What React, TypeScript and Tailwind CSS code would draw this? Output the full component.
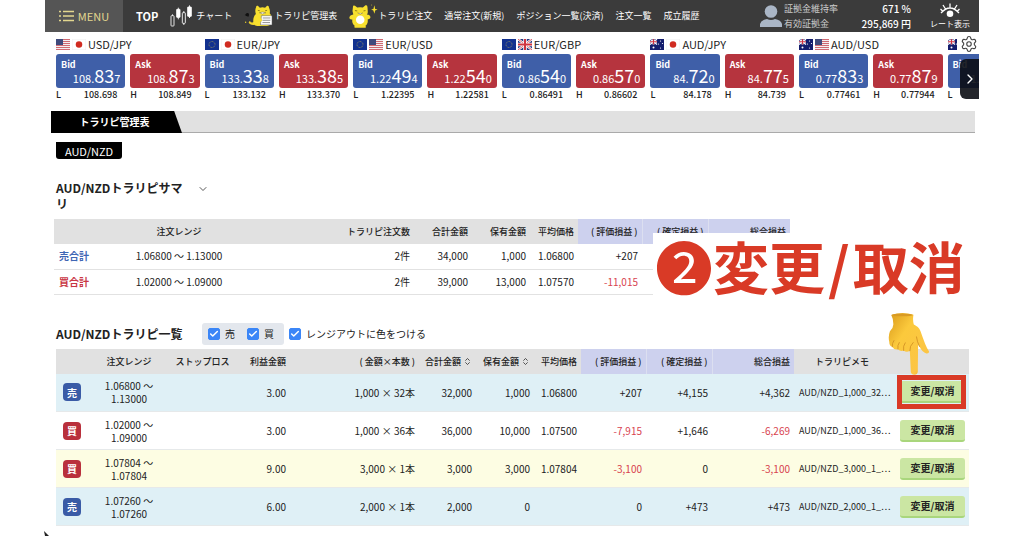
import React, { useState } from 'react';
import { Check, ChevronDown, ChevronRight, ChevronsUpDown, Settings } from 'lucide-react';

type FlagCode = 'us' | 'jp' | 'eu' | 'gb' | 'au';

interface Rate {
  pair: string;
  flags: [FlagCode, FlagCode];
  bid: [string, string, string];
  ask: [string, string, string];
  low: string;
  high: string;
}

interface Order {
  side: '売' | '買';
  from: string;
  to: string;
  profit: string;
  lot: string;
  total: string;
  held: string;
  average: string;
  unrealized: string;
  realized: string;
  sum: string;
  memo: string;
  rowClass: string;
  highlighted?: boolean;
}

const rates: Rate[] = [
  { pair: 'USD/JPY', flags: ['us', 'jp'], bid: ['108.', '83', '7'], ask: ['108.', '87', '3'], low: '108.698', high: '108.849' },
  { pair: 'EUR/JPY', flags: ['eu', 'jp'], bid: ['133.', '33', '8'], ask: ['133.', '38', '5'], low: '133.132', high: '133.370' },
  { pair: 'EUR/USD', flags: ['eu', 'us'], bid: ['1.22', '49', '4'], ask: ['1.22', '54', '0'], low: '1.22395', high: '1.22581' },
  { pair: 'EUR/GBP', flags: ['eu', 'gb'], bid: ['0.86', '54', '0'], ask: ['0.86', '57', '0'], low: '0.86491', high: '0.86602' },
  { pair: 'AUD/JPY', flags: ['au', 'jp'], bid: ['84.', '72', '0'], ask: ['84.', '77', '5'], low: '84.178', high: '84.739' },
  { pair: 'AUD/USD', flags: ['au', 'us'], bid: ['0.77', '83', '3'], ask: ['0.77', '87', '9'], low: '0.77461', high: '0.77944' },
];

const orders: Order[] = [
  { side: '売', from: '1.06800', to: '1.13000', profit: '3.00', lot: '1,000 × 32本', total: '32,000', held: '1,000', average: '1.06800', unrealized: '+207', realized: '+4,155', sum: '+4,362', memo: 'AUD/NZD_1,000_32⋯', rowClass: 'bg-[#dff0f6]', highlighted: true },
  { side: '買', from: '1.02000', to: '1.09000', profit: '3.00', lot: '1,000 × 36本', total: '36,000', held: '10,000', average: '1.07500', unrealized: '-7,915', realized: '+1,646', sum: '-6,269', memo: 'AUD/NZD_1,000_36⋯', rowClass: 'bg-white' },
  { side: '買', from: '1.07804', to: '1.07804', profit: '9.00', lot: '3,000 × 1本', total: '3,000', held: '3,000', average: '1.07804', unrealized: '-3,100', realized: '0', sum: '-3,100', memo: 'AUD/NZD_3,000_1_⋯', rowClass: 'bg-[#fdfde3]' },
  { side: '売', from: '1.07260', to: '1.07260', profit: '6.00', lot: '2,000 × 1本', total: '2,000', held: '0', average: '', unrealized: '0', realized: '+473', sum: '+473', memo: 'AUD/NZD_2,000_1_⋯', rowClass: 'bg-[#dff0f6]' },
];

const summaryCols = ['w-[50px]', 'w-[154px]', 'w-[156px]', 'w-[58px]', 'w-[58px]', 'w-[48px]', 'w-[64px]', 'w-[66px]', 'w-[82px]'];
const orderCols = ['w-[36px]', 'w-[78px]', 'w-[69px]', 'w-[51px]', 'w-[129px]', 'w-[57px]', 'w-[58px]', 'w-[47px]', 'w-[65px]', 'w-[66px]', 'w-[82px]', 'w-[100px]', 'w-[75px]'];

const Flag: React.FC<{ code: FlagCode }> = ({ code }) => (
  <svg viewBox="0 0 28 22" className="h-[11px] w-[14px] shrink-0">
    {code === 'us' && (
      <>
        <rect width="28" height="22" fill="#f3eef0" />
        {[0, 4, 8, 12, 16, 20].map((y) => (
          <rect key={y} y={y} width="28" height="2" fill="#cf6a72" />
        ))}
        <rect width="14" height="12" fill="#3f4a7c" />
      </>
    )}
    {code === 'jp' && (
      <>
        <rect x="0.5" y="0.5" width="27" height="21" fill="#fff" stroke="#efefef" />
        <circle cx="14" cy="11" r="6.5" fill="#d02b20" />
      </>
    )}
    {code === 'eu' && (
      <>
        <rect width="28" height="22" fill="#12318f" />
        <circle cx="14" cy="11" r="6" fill="none" stroke="#a79f58" strokeWidth="1.6" strokeDasharray="1.6 1.5" />
      </>
    )}
    {code === 'gb' && (
      <>
        <rect width="28" height="22" fill="#27397f" />
        <path d="M0 0L28 22M28 0L0 22" stroke="#fff" strokeWidth="4.5" />
        <path d="M0 0L28 22M28 0L0 22" stroke="#cf3340" strokeWidth="1.6" />
        <path d="M14 0V22M0 11H28" stroke="#fff" strokeWidth="7" />
        <path d="M14 0V22M0 11H28" stroke="#cf3340" strokeWidth="4" />
      </>
    )}
    {code === 'au' && (
      <>
        <rect width="28" height="22" fill="#141d6d" />
        <path d="M0 0L14 11M14 0L0 11" stroke="#fff" strokeWidth="2.4" />
        <path d="M7 0V11M0 5.5H14" stroke="#fff" strokeWidth="4" />
        <path d="M7 0V11M0 5.5H14" stroke="#cf3340" strokeWidth="2.2" />
        <circle cx="7" cy="17" r="2" fill="#fff" />
        <circle cx="21" cy="4" r="1.2" fill="#fff" />
        <circle cx="21" cy="18" r="1.2" fill="#fff" />
        <circle cx="17" cy="10" r="1.2" fill="#fff" />
        <circle cx="25" cy="9" r="1.2" fill="#fff" />
      </>
    )}
  </svg>
);

const MenuIcon = () => (
  <svg viewBox="0 0 15 12" className="h-3 w-[15px]" fill="none" stroke="#e3d78f" strokeWidth="1.3">
    <path d="M4 1.5H15M4 6H15M4 10.5H15" />
    <path d="M0 1.5H2M0 6H2M0 10.5H2" />
  </svg>
);

const CandleIcon = () => (
  <svg viewBox="30 15 66 66" className="size-[22px]" fill="none" stroke="#fff" strokeWidth="2.6">
    <rect x="33" y="47" width="9" height="31" rx="2" />
    <path d="M37.5 43V47" />
    <rect x="50" y="28" width="10" height="24" rx="1" fill="#fff" />
    <path d="M55 23V58" />
    <rect x="67" y="38" width="9" height="32" rx="2" />
    <path d="M71.5 33V38M71.5 70V75" />
    <rect x="83" y="21" width="11" height="28" rx="1" fill="#fff" />
    <path d="M88.5 16V54" />
  </svg>
);

const CatPaperIcon = () => (
  <svg viewBox="244 14 88 66" className="h-[22px] w-[29px]">
    <path d="M258 66Q262 76 276 74L276 64Q266 70 262 62Z" fill="#f2d62c" />
    <circle cx="249" cy="66" r="2" fill="#f2d62c" />
    <circle cx="254" cy="43" r="5" fill="#111" />
    <path d="M246 44L257 39L258 49Z" fill="#111" />
    <path d="M281 20Q280 15 286 16L292 22Q300 19 308 22L314 16Q320 15 320 22Q324 30 322 39Q328 44 327 54L326 70Q322 78 312 77H284Q272 77 272 62Q272 48 280 41Q276 30 281 20Z" fill="#f8e02e" />
    <path d="M286 30L292 31M308 31L314 30" stroke="#6b5a12" strokeWidth="2" />
    <path d="M291 37Q300 45 310 37Q300 33 291 37Z" fill="#fff" stroke="#6b5a12" strokeWidth="1.5" />
    <path d="M297 46H329V74H294Z" fill="#fff" stroke="#5a5a5a" strokeWidth="1.5" />
    <path d="M301 53H324M300 60H324M300 67H323" stroke="#777" strokeWidth="2.4" />
    <circle cx="294" cy="59" r="5" fill="#f8e02e" />
  </svg>
);

const CatStarIcon = () => (
  <svg viewBox="556 11 88 76" className="h-[25px] w-[29px]">
    <path d="M568 19Q568 14 574 16L581 22Q590 20 598 22L606 15Q612 13 612 20L613 33Q614 40 610 43Q622 44 621 53Q618 59 613 57Q614 72 606 77Q610 84 602 83H578Q570 84 573 77Q564 70 566 58Q557 60 557 52Q558 45 569 43Q565 30 568 19Z" fill="#f8e02e" />
    <circle cx="590" cy="59" r="13" fill="#fff" />
    <path d="M574 31L581 32M600 32L606 31" stroke="#6b5a12" strokeWidth="2.2" />
    <path d="M582 38Q590 45 598 38" fill="#fff" stroke="#6b5a12" strokeWidth="1.8" />
    <path d="M633 15L635.5 26L643 28L635.5 31L633 41L630 31L623 28L630 26Z" fill="#f8e02e" />
    <circle cx="625" cy="14" r="1.5" fill="#f8e02e" />
  </svg>
);

const UserIcon = () => (
  <svg viewBox="0 0 22 22" className="size-[22px]" fill="#aab6c6">
    <circle cx="11" cy="6.5" r="6.3" />
    <path d="M0 22V19Q1 15 7 14Q11 16 15 14Q21 15 22 19V22Z" />
  </svg>
);

const EyeIcon = () => (
  <svg viewBox="0 0 20 15" className="h-[15px] w-5" fill="none" stroke="#fff" strokeWidth="1.3">
    <path d="M1 10Q10 0 19 10M10 5V0.5M5.5 6L3 2M14.5 6L17 2M2.5 8L0.5 6M17.5 8L19.5 6" />
    <circle cx="10" cy="10.8" r="3.3" fill="#fff" stroke="none" />
  </svg>
);

const PointingHand = () => (
  <svg viewBox="55 25 125 187" className="absolute -top-[68px] -left-3 z-20 h-[62px] w-[42px]">
    <defs>
      <linearGradient id="skin" x1="0" y1="0" x2="1" y2="1">
        <stop offset="0" stopColor="#d99a1c" />
        <stop offset="0.35" stopColor="#fbc93c" />
        <stop offset="0.8" stopColor="#fcc544" />
        <stop offset="1" stopColor="#e09b25" />
      </linearGradient>
    </defs>
    <path d="M64 31Q96 20 131 30Q128 46 132 60Q146 66 152 79Q158 96 166 118Q172 133 178 141Q178 148 170 147Q157 143 149 126L145 120L144 202Q143 211 134 211Q124 211 123 202L120 139Q110 145 101 138Q92 142 84 134Q73 138 67 127Q58 125 58 112Q54 96 60 80Q72 68 70 56Q70 42 64 31Z" fill="url(#skin)" />
    <ellipse cx="97" cy="31" rx="32" ry="4" fill="#d99b24" />
    <path d="M84 134Q82 122 88 114M101 138Q99 124 106 115M67 127Q66 116 72 108M120 139Q119 124 130 114M149 126Q142 112 140 97" fill="none" stroke="#d08f22" strokeWidth="2.5" strokeLinecap="round" />
  </svg>
);

const QuoteButton: React.FC<{ label: 'Bid' | 'Ask'; price: [string, string, string] }> = ({ label, price }) => (
  <button
    className={`h-[34px] rounded-[3px] px-[5px] pt-[5px] text-white ${label === 'Bid' ? 'bg-[#3f5fa8]' : 'bg-[#b6343e]'}`}
  >
    <span className="block text-left text-[9px] leading-[10px] font-bold">{label}</span>
    <span className="-mt-1 block text-right text-[11px] leading-[18px] whitespace-nowrap">
      {price[0]}
      <span className="text-[18px]">{price[1]}</span>
      {price[2]}
    </span>
  </button>
);

const RateCard: React.FC<{ rate: Rate }> = ({ rate }) => (
  <div className="w-[16.1%] shrink-0 pr-[5px]">
    <div className="flex h-[14px] items-center gap-[2px]">
      <Flag code={rate.flags[0]} />
      <Flag code={rate.flags[1]} />
      <span className="text-[11px] leading-[14px] text-[#222]">{rate.pair}</span>
    </div>
    <div className="mt-[3px] grid grid-cols-2 gap-[5px]">
      <QuoteButton label="Bid" price={rate.bid} />
      <QuoteButton label="Ask" price={rate.ask} />
      <p className="-mt-1 flex justify-between pr-2 text-[9px] leading-[12px] font-medium"><span>L</span>{rate.low}</p>
      <p className="-mt-1 flex justify-between pr-2 text-[9px] leading-[12px] font-medium"><span>H</span>{rate.high}</p>
    </div>
  </div>
);

const CheckItem: React.FC<{ id: string; label: string }> = ({ id, label }) => {
  const [checked, setChecked] = useState(true);

  return (
    <div className="flex items-center gap-[5px]">
      <span className="relative flex size-3">
        <input
          id={id}
          type="checkbox"
          checked={checked}
          onChange={(e) => setChecked(e.target.checked)}
          className="size-3 appearance-none rounded-[2px] border border-[#3b86f7] checked:bg-[#3b86f7]"
        />
        {checked && <Check size={10} strokeWidth={3.5} className="pointer-events-none absolute top-px left-px text-white" />}
      </span>
      <label htmlFor={id} className="text-[10px] leading-[14px]">{label}</label>
    </div>
  );
};

const SortLabel: React.FC<{ label: string }> = ({ label }) => (
  <button className="inline-flex items-center gap-[2px] whitespace-nowrap">
    {label}
    <ChevronsUpDown size={9} strokeWidth={2} />
  </button>
);

const amountClass = (value: string) => (value.startsWith('-') ? 'text-[#d8434f]' : '');

export default function App() {
  return (
    <div className="relative min-h-screen bg-white px-[45px] font-['Noto_Sans_CJK_JP','Noto_Sans',sans-serif] text-[#222]">
      <header className="flex h-8 items-center bg-[#3b3b3b] text-[9px] text-white">
        <button className="flex h-8 w-[78px] shrink-0 items-center justify-center gap-1 bg-[#555] text-[11px] text-[#e3d78f]">
          <MenuIcon />
          MENU
        </button>
        <nav className="flex flex-1 items-center gap-3 pl-[13px] whitespace-nowrap">
          <a href="#" className="text-[11px] font-bold">TOP</a>
          <a href="#" className="flex items-center gap-1"><CandleIcon />チャート</a>
          <a href="#" className="flex items-center gap-px"><CatPaperIcon />トラリピ管理表</a>
          <a href="#" className="flex items-center"><CatStarIcon />トラリピ注文</a>
          <a href="#">通常注文(新規)</a>
          <a href="#">ポジション一覧(決済)</a>
          <a href="#">注文一覧</a>
          <a href="#">成立履歴</a>
        </nav>
        <div className="flex items-center gap-[2px]">
          <UserIcon />
          <dl className="grid w-[127px] grid-cols-[auto_1fr] text-[9px] leading-[15px]">
            <dt className="text-[#ccc]">証拠金維持率</dt>
            <dd className="text-right text-[10px] font-medium">671 %</dd>
            <dt className="text-[#ccc]">有効証拠金</dt>
            <dd className="text-right text-[10px] font-medium">295,869 円</dd>
          </dl>
        </div>
        <button className="flex w-[68px] flex-col items-center pl-[10px] text-[8px] leading-[12px]">
          <EyeIcon />
          レート表示
        </button>
      </header>

      <section className="relative flex overflow-hidden pt-[5px] pb-[10px] pl-[11px]">
        {rates.map((rate) => (
          <RateCard key={rate.pair} rate={rate} />
        ))}
        <RateCard rate={{ pair: 'AUD/NZD', flags: ['au', 'us'], bid: ['1.0', '70', '0'], ask: ['1.0', '72', '0'], low: '1.06', high: '1.07' }} />
        <button aria-label="設定" className="absolute top-[3px] right-0 bg-white pr-px pl-[3px] text-[#444]">
          <Settings size={18} strokeWidth={1.5} />
        </button>
        <button aria-label="次へ" className="absolute top-[27px] right-0 flex h-10 w-[19px] items-center justify-center rounded-l-md bg-[#0b0d14]/90 text-white">
          <ChevronRight size={16} strokeWidth={2} />
        </button>
      </section>

      <div className="mr-1 ml-[6px] flex h-[22px] border-b border-[#aaa] bg-[#e1e1e1]">
        <button className="h-[22px] w-[131px] bg-black pr-1 pb-[2px] text-[10px] font-bold text-white [clip-path:polygon(0_0,94%_0,100%_100%,0_100%)]">
          トラリピ管理表
        </button>
      </div>

      <main className="pr-[10px] pl-[11px]">
        <button className="mt-[9px] block h-[17px] w-[66px] rounded-b-[3px] bg-black text-[11px] leading-[14px] text-white">
          AUD/NZD
        </button>

        <div className="mt-[21px] flex items-start gap-[5px]">
          <h2 className="w-[136px] text-[12px] leading-4 font-bold">AUD/NZDトラリピサマリ</h2>
          <button aria-label="開閉" className="mt-[3px]"><ChevronDown size={12} strokeWidth={1.5} /></button>
        </div>

        <div className="relative mt-[7px] -ml-[2px]">
          <table className="w-[736px] table-fixed text-right text-[10px] leading-[14px]">
            <colgroup>{summaryCols.map((c, i) => <col key={i} className={c} />)}</colgroup>
            <thead>
              <tr className="h-[25px] bg-[#e1e1e1] text-[9px] whitespace-nowrap [&>th]:pr-1 [&>th]:font-medium">
                <th />
                <th className="text-center">注文レンジ</th>
                <th>トラリピ注文数</th>
                <th>合計金額</th>
                <th>保有金額</th>
                <th>平均価格</th>
                <th className="border-r border-[#dcdff0] bg-[#cdd1ee]">( 評価損益 )</th>
                <th className="border-r border-[#dcdff0] bg-[#cdd1ee]">( 確定損益 )</th>
                <th className="bg-[#cdd1ee]">総合損益</th>
              </tr>
            </thead>
            <tbody className="[&_td]:pr-1">
              <tr className="h-[25px] border-b border-[#e2e2e2]">
                <td className="pl-[5px] text-left font-bold text-[#3f66b4]">売合計</td>
                <td className="text-center">1.06800 〜 1.13000</td>
                <td>2件</td>
                <td>34,000</td>
                <td>1,000</td>
                <td>1.06800</td>
                <td>+207</td>
                <td />
                <td />
              </tr>
              <tr className="h-[25px] border-b border-[#e2e2e2]">
                <td className="pl-[5px] text-left font-bold text-[#c93644]">買合計</td>
                <td className="text-center">1.02000 〜 1.09000</td>
                <td>2件</td>
                <td>39,000</td>
                <td>13,000</td>
                <td>1.07570</td>
                <td className="text-[#d8434f]">-11,015</td>
                <td />
                <td />
              </tr>
            </tbody>
          </table>
          <p className="absolute top-[14px] left-[599px] flex h-[76px] items-center bg-white pr-1 pb-3 pl-[2px] text-[56px] leading-[64px] font-bold whitespace-nowrap text-[#d93a26]">
            <span className="text-[58px] font-normal">❷</span>変更<span className="px-[3px]">/</span>取消
          </p>
        </div>

        <div className="mt-7 flex items-center">
          <h2 className="w-[146px] text-[12px] leading-4 font-bold">AUD/NZDトラリピ一覧</h2>
          <div className="mr-[5px] flex h-[22px] items-center gap-3 rounded-[3px] bg-[#e3e7ed] px-[6px] pr-[10px]">
            <CheckItem id="filter-sell" label="売" />
            <CheckItem id="filter-buy" label="買" />
          </div>
          <CheckItem id="range-out" label="レンジアウトに色をつける" />
        </div>

        <table className="mt-1 w-full table-fixed text-right text-[10px] leading-[13px] whitespace-nowrap">
          <colgroup>{orderCols.map((c, i) => <col key={i} className={c} />)}</colgroup>
          <thead>
            <tr className="h-[25px] bg-[#e1e1e1] text-[9px] [&>th]:pr-1 [&>th]:font-medium">
              <th />
              <th className="text-center">注文レンジ</th>
              <th className="text-center">ストップロス</th>
              <th>利益金額</th>
              <th>( 金額×本数 )</th>
              <th><SortLabel label="合計金額" /></th>
              <th><SortLabel label="保有金額" /></th>
              <th>平均価格</th>
              <th className="border-r border-[#dcdff0] bg-[#cdd1ee]">( 評価損益 )</th>
              <th className="border-r border-[#dcdff0] bg-[#cdd1ee]">( 確定損益 )</th>
              <th className="bg-[#cdd1ee]">総合損益</th>
              <th className="text-center">トラリピメモ</th>
              <th />
            </tr>
          </thead>
          <tbody className="[&_td]:pr-1">
            {orders.map((order) => (
              <tr key={order.memo} className={`h-[38px] border-b border-[#e6e9ea] ${order.rowClass}`}>
                <td>
                  <span
                    className={`mx-auto flex size-[18px] items-center justify-center rounded-[4px] text-[10px] font-bold text-white ${order.side === '売' ? 'bg-[#3a5ba6]' : 'bg-[#b9303c]'}`}
                  >
                    {order.side}
                  </span>
                </td>
                <td className="text-center">{order.from} 〜<br />{order.to}</td>
                <td />
                <td>{order.profit}</td>
                <td>{order.lot}</td>
                <td>{order.total}</td>
                <td>{order.held}</td>
                <td>{order.average}</td>
                <td className={amountClass(order.unrealized)}>{order.unrealized}</td>
                <td className={amountClass(order.realized)}>{order.realized}</td>
                <td className={amountClass(order.sum)}>{order.sum}</td>
                <td className="pl-[5px] text-left text-[9px]">{order.memo}</td>
                <td>
                  <div className="relative ml-[6px]">
                    <button className="block h-[22px] w-full rounded-[3px] border-b-2 border-[#a9d67c] bg-[#cbe6a3] text-[10px] leading-[20px] font-bold">
                      変更/取消
                    </button>
                    {order.highlighted && (
                      <>
                        <span className="pointer-events-none absolute -top-[6px] -right-px -bottom-[6px] -left-[3px] z-10 border-[5px] border-[#d93a26]" />
                        <PointingHand />
                      </>
                    )}
                  </div>
                </td>
              </tr>
            ))}
          </tbody>
        </table>
      </main>

      <svg viewBox="0 0 5 5" className="absolute bottom-0 left-[44px] size-[5px]">
        <path d="M0 0L5 5H1Z" fill="#222" />
      </svg>
    </div>
  );
}
